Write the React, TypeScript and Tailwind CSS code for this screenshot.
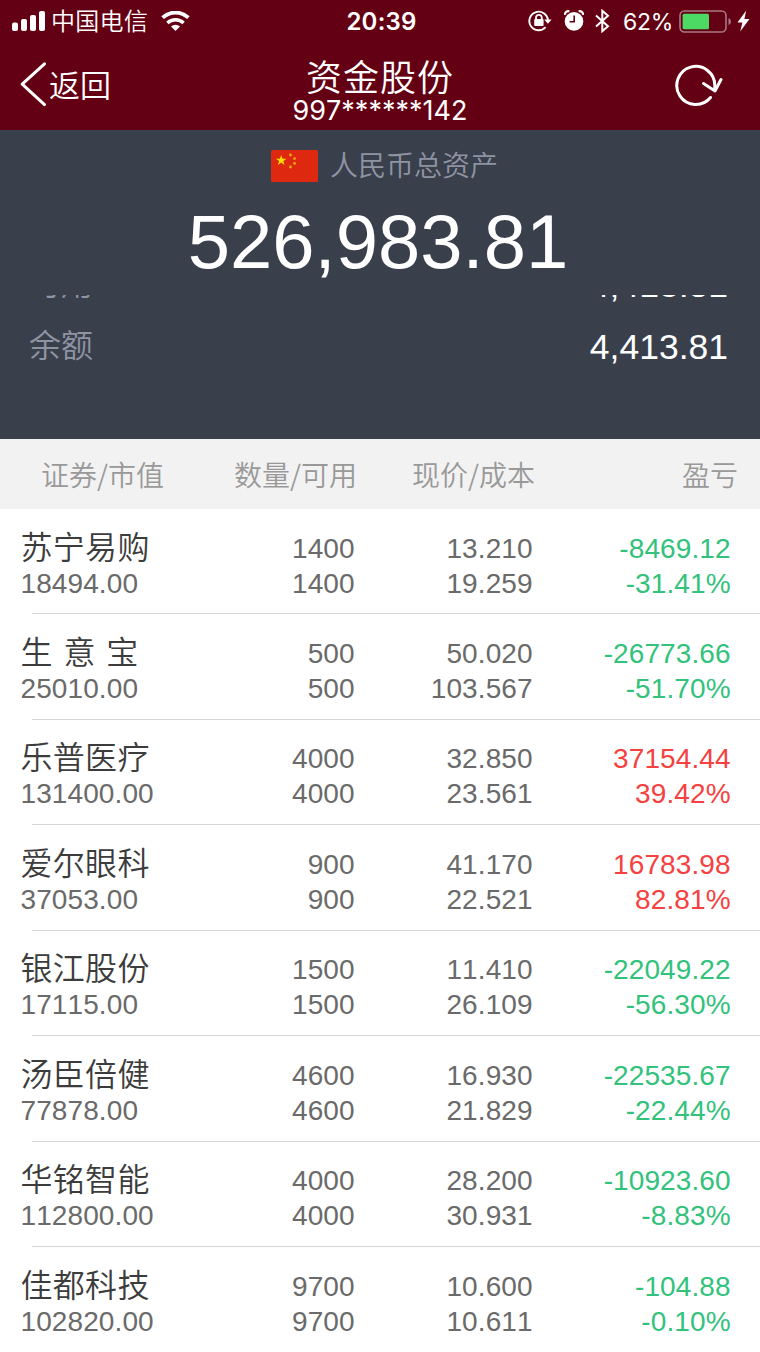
interface Holding {
    name: string;
    value: string;
    amount: string;
    available: string;
    price: string;
    cost: string;
    profit: string;
    rate: string;
}

const holdings: Holding[] = [
    { name: '苏宁易购', value: '18494.00', amount: '1400', available: '1400', price: '13.210', cost: '19.259', profit: '-8469.12', rate: '-31.41%' },
    { name: '生 意 宝', value: '25010.00', amount: '500', available: '500', price: '50.020', cost: '103.567', profit: '-26773.66', rate: '-51.70%' },
    { name: '乐普医疗', value: '131400.00', amount: '4000', available: '4000', price: '32.850', cost: '23.561', profit: '37154.44', rate: '39.42%' },
    { name: '爱尔眼科', value: '37053.00', amount: '900', available: '900', price: '41.170', cost: '22.521', profit: '16783.98', rate: '82.81%' },
    { name: '银江股份', value: '17115.00', amount: '1500', available: '1500', price: '11.410', cost: '26.109', profit: '-22049.22', rate: '-56.30%' },
    { name: '汤臣倍健', value: '77878.00', amount: '4600', available: '4600', price: '16.930', cost: '21.829', profit: '-22535.67', rate: '-22.44%' },
    { name: '华铭智能', value: '112800.00', amount: '4000', available: '4000', price: '28.200', cost: '30.931', profit: '-10923.60', rate: '-8.83%' },
    { name: '佳都科技', value: '102820.00', amount: '9700', available: '9700', price: '10.600', cost: '10.611', profit: '-104.88', rate: '-0.10%' },
];

const balances = [
    { label: '可用', value: '4,413.81' },
    { label: '余额', value: '4,413.81' },
];

function StatusBar() {
    return (
        <div className="grid h-[42px] grid-cols-[1fr_auto_1fr] items-center pl-3 pr-[10px] font-['Inter','Noto_Sans_CJK_SC',sans-serif]">
            <div className="flex items-center">
                <svg width="33" height="21" viewBox="0 0 33 21" fill="#fff">
                    <rect x="0" y="11.5" width="6" height="8.5" rx="2" />
                    <rect x="9" y="8" width="6" height="12" rx="2" />
                    <rect x="18" y="4" width="6" height="16" rx="2" />
                    <rect x="27" y="0" width="6" height="20" rx="2" />
                </svg>
                <span className="ml-[6px] pt-0.5 text-[24px] font-[350] leading-none tracking-[0.3px]">中国电信</span>
                <svg className="ml-[13px]" width="29" height="21" viewBox="0 0 29 21" fill="none" stroke="#fff">
                    <path d="M1.6 6.7A18.6 18.6 0 0 1 27.4 6.7" strokeWidth="3.8" />
                    <path d="M6.4 11.9A11.8 11.8 0 0 1 22.6 11.9" strokeWidth="3.4" />
                    <path d="M14.5 20L10 15.5A6.4 6.4 0 0 1 19 15.5Z" fill="#fff" stroke="none" />
                </svg>
            </div>
            <span className="pl-px pt-0.5 text-[24px] font-semibold leading-none tracking-[0.2px]">20:39</span>
            <div className="flex items-center justify-end">
                {/* rotation lock */}
                <svg width="24" height="22" viewBox="0 0 24 22" fill="none" stroke="#fff" strokeWidth="1.9">
                    <path d="M17.6 17.2A9.3 9.3 0 1 1 19.9 10" />
                    <path d="M16.2 9.4H23.6L19.9 13.8Z" fill="#fff" stroke="none" />
                    <rect x="6.2" y="9" width="9.4" height="7" rx="1" fill="#fff" stroke="none" />
                    <path d="M8 10V7.8A2.9 2.9 0 0 1 13.8 7.8V10" strokeWidth="1.8" />
                </svg>
                {/* alarm */}
                <svg className="ml-3" width="20" height="22" viewBox="0 0 20 22">
                    <circle cx="10" cy="11.4" r="9.3" fill="#fff" />
                    <path d="M1 4.8A3.2 3.2 0 0 1 5.4 1.4M19 4.8A3.2 3.2 0 0 0 14.6 1.4" fill="none" stroke="#fff" strokeWidth="2.2" />
                    <path d="M10.2 5.6V11.8H5.6" fill="none" stroke="#640013" strokeWidth="1.6" />
                </svg>
                {/* bluetooth */}
                <svg className="ml-[11px]" width="15" height="24" viewBox="0 0 15 24" fill="none" stroke="#fff" strokeWidth="2">
                    <path d="M1 6.5L13 17.2L7.3 22.2V1.8L13 6.8L1 17.5" />
                </svg>
                <span className="ml-[13px] pt-0.5 text-[23px] leading-none tracking-[-0.3px]">62%</span>
                <svg className="ml-[6px]" width="53" height="23" viewBox="0 0 53 23">
                    <rect x="1" y="1" width="46" height="21" rx="4.5" fill="none" stroke="#a77983" strokeWidth="1.6" />
                    <rect x="3.6" y="3.8" width="26.4" height="15.4" rx="1.5" fill="#4cd964" />
                    <path d="M49.5 8Q52 9 52 11.5T49.5 15Z" fill="#a77983" />
                </svg>
                <svg className="ml-[5px]" width="13" height="22" viewBox="0 0 13 22" fill="#fff">
                    <path d="M9.2 0.5L0.5 12.5H5.4L3.2 21.5L12.5 9H7.4Z" />
                </svg>
            </div>
        </div>
    );
}

function NavBar() {
    return (
        <div className="grid h-[86px] grid-cols-[1fr_auto_1fr] items-center px-5 font-['Inter','Noto_Sans_CJK_SC',sans-serif]">
            <div className="flex items-center">
                <svg width="27" height="46" viewBox="0 0 27 46" fill="none" stroke="#fff" strokeWidth="3" strokeLinecap="round" strokeLinejoin="round">
                    <path d="M24.5 1.8L2.2 22.2L24.5 42.6" />
                </svg>
                <span className="ml-[2px] text-[31px] font-[350] leading-none">返回</span>
            </div>
            <div className="flex flex-col items-center pt-[13px]">
                <h1 className="text-[36px] font-[350] leading-[38px] tracking-[1px]">资金股份</h1>
                <span className="text-[27px] leading-[27px]">997******142</span>
            </div>
            <div className="flex justify-end pr-[17px]">
                <svg width="48" height="42" viewBox="0 0 48 42" fill="none" stroke="#fff" strokeWidth="3" strokeLinecap="round" strokeLinejoin="round">
                    <path d="M35.5 33.5A19 19 0 1 1 39.8 22V25" />
                    <path d="M28.5 19.5L40 27L46 15.5" />
                </svg>
            </div>
        </div>
    );
}

function Flag() {
    return (
        <svg width="47" height="32" viewBox="0 0 47 32">
            <rect width="47" height="32" rx="1.5" fill="#de2910" />
            <path d="M10.2 5L11.5 8.8H15.5L12.3 11.1L13.5 14.9L10.2 12.6L6.9 14.9L8.1 11.1L4.9 8.8H8.9Z" fill="#ffde00" />
            <g fill="#e9a80c">
                <circle cx="19.5" cy="5" r="1.4" />
                <circle cx="23.6" cy="8.6" r="1.4" />
                <circle cx="23.6" cy="13.4" r="1.4" />
                <circle cx="19.5" cy="17" r="1.4" />
            </g>
        </svg>
    );
}

function HoldingRow({ item }: { item: Holding }) {
    const color = item.profit.startsWith('-') ? 'text-[#32c27c]' : 'text-[#f5413f]';

    return (
        <li className="group flex h-[105.45px] shrink-0 flex-col justify-between">
            <div className="grid grid-cols-[209.7px_145px_178px_198px] pt-[21.5px] text-right text-[28px] leading-[35px] tracking-[0.1px] text-[#6a6a6a]">
                <div className="pl-[20.5px] text-left">
                    <div className="h-[35px] text-[32px] font-[350] tracking-[0.3px] text-[#3c3c3c] [word-spacing:1.4px]">{item.name}</div>
                    <div>{item.value}</div>
                </div>
                <div>
                    <div>{item.amount}</div>
                    <div>{item.available}</div>
                </div>
                <div>
                    <div>{item.price}</div>
                    <div>{item.cost}</div>
                </div>
                <div className={color}>
                    <div>{item.profit}</div>
                    <div>{item.rate}</div>
                </div>
            </div>
            <div className="ml-8 h-px bg-[#d6d6d6] group-last:hidden" />
        </li>
    );
}

export default function App() {
    return (
        <div className="flex h-[1352px] w-[760px] flex-col overflow-hidden bg-white font-['Liberation_Sans','Noto_Sans_CJK_SC',sans-serif] [font-kerning:none]">
            <header className="h-[130px] shrink-0 bg-[#640013] text-white">
                <StatusBar />
                <NavBar />
            </header>

            <section className="flex h-[309px] shrink-0 flex-col bg-[#3a3f4c]">
                <div className="flex h-[165px] shrink-0 flex-col items-center pt-[19px]">
                    <div className="flex h-[34px] items-center gap-3 pl-[9px]">
                        <Flag />
                        <span className="pt-0.5 text-[28px] font-[350] leading-none text-[#8f94a3]">人民币总资产</span>
                    </div>
                    <div className="mt-[17px] pr-1 text-[76px] leading-[84px] text-white">526,983.81</div>
                </div>
                {/* scrolled list, first row slides under the total */}
                <div className="flex-1 overflow-hidden">
                    <div className="-mt-[41px] flex flex-col gap-px">
                        {balances.map((row) => (
                            <div key={row.label} className="flex h-[61px] items-center justify-between pl-[29px] pr-8">
                                <span className="pb-px text-[32px] font-[350] text-[#8f94a3]">{row.label}</span>
                                <span className="pt-[3px] text-[35.5px] text-white">{row.value}</span>
                            </div>
                        ))}
                    </div>
                </div>
            </section>

            <div className="grid h-[70px] shrink-0 grid-cols-[164px_193px_178px_203px] items-center bg-[#f2f2f2] text-right font-['Noto_Sans_CJK_SC',sans-serif] text-[28px] font-[350] text-[#999]">
                <span>证券/市值</span>
                <span>数量/可用</span>
                <span>现价/成本</span>
                <span>盈亏</span>
            </div>

            <ul className="flex flex-col">
                {holdings.map((item) => (
                    <HoldingRow key={item.name} item={item} />
                ))}
            </ul>
        </div>
    );
}
